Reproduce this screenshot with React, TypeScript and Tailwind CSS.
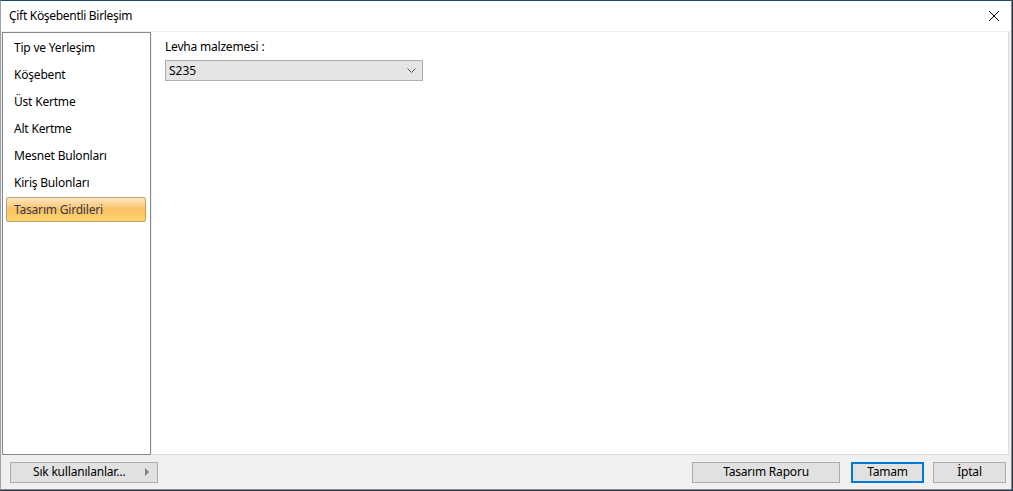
import React from "react";

const menuItems = [
  "Tip ve Yerleşim",
  "Köşebent",
  "Üst Kertme",
  "Alt Kertme",
  "Mesnet Bulonları",
  "Kiriş Bulonları",
  "Tasarım Girdileri",
];

const font = { fontFamily: '"Segoe UI", "Noto Sans", "Liberation Sans", sans-serif' };

const Button = ({
  label,
  className,
  focused,
}: {
  label: string;
  className: string;
  focused?: boolean;
}) => (
  <button
    className={`h-[21px] flex items-center justify-center text-[12px] tracking-[-0.2px] text-black bg-[#e1e1e1] ${
      focused ? "border-2 border-[#0078d7]" : "border border-[#adadad]"
    } ${className}`}
  >
    {label}
  </button>
);

export default function App() {
  const selected = 6;

  return (
    <div className="w-[1013px] h-[491px] bg-[#243447] overflow-hidden" style={font}>
      <div className="w-[1012px] h-[490px] flex flex-col border-t border-t-[#1b4a6b] border-r border-r-[#8a8a8a] border-b border-b-[#8a8a8a] border-l border-l-[#a0a0a0]">
        {/* title bar */}
        <div className="h-[30px] bg-white flex items-center justify-between pl-[8px] pr-[11px]">
          <span className="text-[12px] tracking-[-0.3px] text-black">Çift Köşebentli Birleşim</span>
          <svg width="12" height="12" viewBox="0 0 12 12">
            <path d="M1 1 L11 11 M11 1 L1 11" stroke="#000" strokeWidth="1" fill="none" />
          </svg>
        </div>

        {/* body */}
        <div className="flex-1 bg-[#f0f0f0] flex flex-col">
          <div className="flex-1 flex gap-[1px] pt-[1px] pl-[1px] pr-[2px]">
            {/* left list */}
            <div className="w-[149px] bg-white border border-[#828790] pt-[1px] pl-[3px] pr-[4px]">
              {menuItems.map((item, i) => (
                <div key={item} className="h-[27px] flex items-center text-[12px] tracking-[-0.2px]">
                  {i === selected ? (
                    <div className="w-full h-[25px] flex items-center pl-[7px] text-[#383850] border border-[#c2a06c] rounded-[2px] bg-gradient-to-b from-[#fde8c0] via-[#f9c163] to-[#ffd66e]">
                      {item}
                    </div>
                  ) : (
                    <span className="pl-[8px] text-black">{item}</span>
                  )}
                </div>
              ))}
            </div>

            {/* right panel */}
            <div className="flex-1 bg-white border border-[#dadada] border-t-0 border-l-0 pl-[13px] pt-[5px]">
              <div className="text-[12px] tracking-[-0.2px] text-black leading-[20px]">Levha malzemesi :</div>
              <div className="mt-[3px] w-[258px] h-[21px] bg-[#e5e5e5] border border-[#adadad] flex items-center justify-between pl-[3px] pr-[6px]">
                <span className="text-[12px] text-black">S235</span>
                <svg width="9" height="6" viewBox="0 0 9 6">
                  <path d="M0.5 0.5 L4.5 4.5 L8.5 0.5" stroke="#555" strokeWidth="1" fill="none" />
                </svg>
              </div>
            </div>
          </div>

          {/* bottom bar */}
          <div className="h-[34px] flex items-center pl-[9px] pr-[5px]">
            <button className="w-[148px] h-[21px] bg-[#e1e1e1] border border-[#adadad] flex items-center justify-between pl-[22px] pr-[7px] text-[12px] tracking-[-0.2px] text-black">
              <span>Sık kullanılanlar…</span>
              <svg width="5" height="8" viewBox="0 0 5 8">
                <path d="M0 0 L4 4 L0 8 Z" fill="#808080" />
              </svg>
            </button>
            <div className="flex-1" />
            <Button label="Tasarım Raporu" className="w-[148px]" />
            <Button label="Tamam" className="w-[73px] ml-[11px]" focused />
            <Button label="İptal" className="w-[73px] ml-[9px]" />
          </div>
        </div>
      </div>
    </div>
  );
}
